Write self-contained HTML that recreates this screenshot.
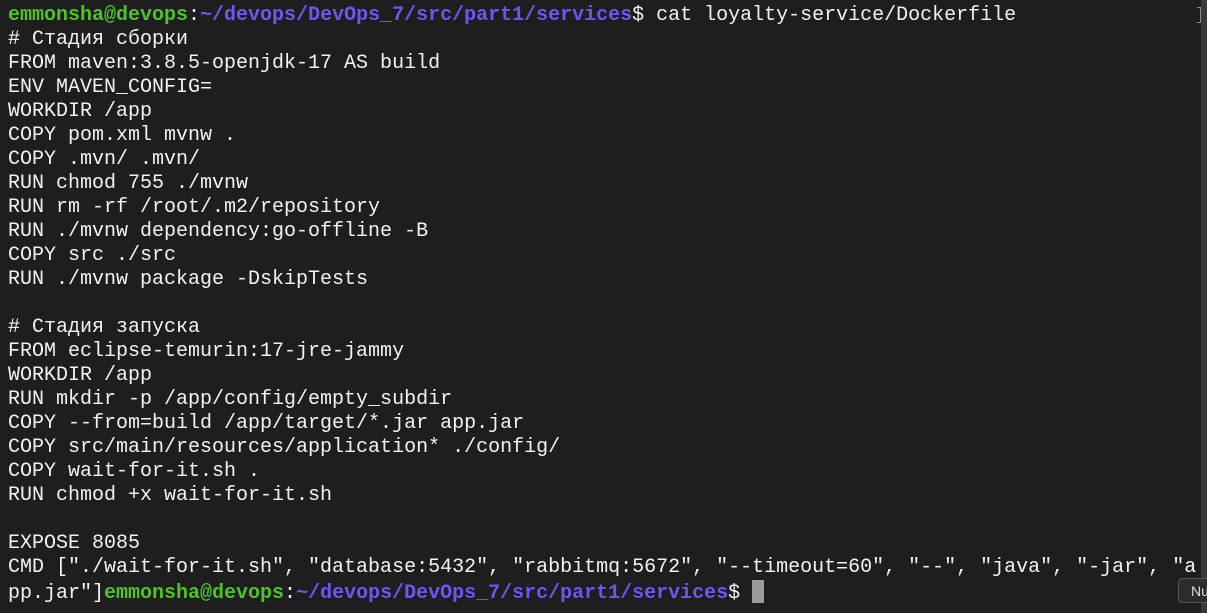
<!DOCTYPE html>
<html><head><meta charset="utf-8"><style>
html,body{margin:0;padding:0;width:1207px;height:613px;overflow:hidden;background:#1e1e1e;}
pre{margin:0;position:absolute;left:8px;top:4px;font-family:"Liberation Mono",monospace;font-size:20px;line-height:24px;color:#f2f2f2;white-space:pre;}
.g{color:#4fc224;font-weight:bold}.b{color:#6b58f2;font-weight:bold}
.cur{display:inline-block;width:12px;height:23px;background:#9a9a9a;vertical-align:-5px}
.sb{position:absolute;right:0;top:0;width:6px;height:613px;background:#393939}
.br{position:absolute;left:1197px;top:7px;width:3px;height:14px;border:1px solid #888;border-left:none}
.tip{position:absolute;left:1178px;top:578px;width:40px;height:25px;background:#2c2c2c;border:1px solid #555;border-radius:4px;color:#ddd;font:14px "Liberation Sans",sans-serif;line-height:25px;padding-left:12px;box-sizing:border-box}
</style></head><body>
<pre><span class="g">emmonsha@devops</span>:<span class="b">~/devops/DevOps_7/src/part1/services</span>$ cat loyalty-service/Dockerfile
# Стадия сборки
FROM maven:3.8.5-openjdk-17 AS build
ENV MAVEN_CONFIG=
WORKDIR /app
COPY pom.xml mvnw .
COPY .mvn/ .mvn/
RUN chmod 755 ./mvnw
RUN rm -rf /root/.m2/repository
RUN ./mvnw dependency:go-offline -B
COPY src ./src
RUN ./mvnw package -DskipTests

# Стадия запуска
FROM eclipse-temurin:17-jre-jammy
WORKDIR /app
RUN mkdir -p /app/config/empty_subdir
COPY --from=build /app/target/*.jar app.jar
COPY src/main/resources/application* ./config/
COPY wait-for-it.sh .
RUN chmod +x wait-for-it.sh

EXPOSE 8085
CMD ["./wait-for-it.sh", "database:5432", "rabbitmq:5672", "--timeout=60", "--", "java", "-jar", "a
pp.jar"]<span class="g">emmonsha@devops</span>:<span class="b">~/devops/DevOps_7/src/part1/services</span>$ <span class="cur"></span></pre>
<div class="br"></div>
<div class="sb"></div>
<div class="tip">Nu</div>
</body></html>
